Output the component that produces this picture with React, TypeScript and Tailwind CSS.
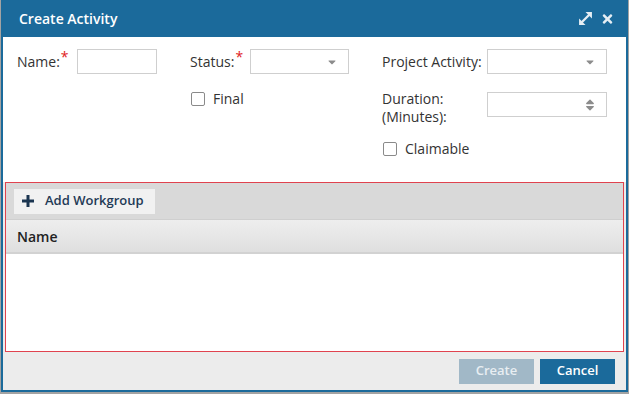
import React from "react";
import { FaTimes, FaCaretDown, FaSort } from "react-icons/fa";

function Req() {
  return <span className="text-[#e02020] text-[14px] leading-none relative -top-[5px] ml-[1px]">*</span>;
}

function Check({ label }: { label: string }) {
  return (
    <label className="flex items-center gap-[8px] text-[14px] text-[#333]">
      <span className="w-[14px] h-[14px] border border-[#8a8a8a] rounded-[2px] bg-white" />
      {label}
    </label>
  );
}

function Select({ w }: { w: string }) {
  return (
    <div className={`${w} h-[25px] border border-[#cfcfcf] bg-white flex items-center justify-end pr-[10px]`}>
      <FaCaretDown className="text-[#8c8c8c] w-[12px] h-[12px]" />
    </div>
  );
}

function ExpandIcon() {
  return (
    <svg width="15" height="15" viewBox="0 0 14 14" className="text-[#e6eef4]">
      <line x1="3.5" y1="10.5" x2="10.5" y2="3.5" stroke="currentColor" strokeWidth="2.2" />
      <polygon points="7,1 13,1 13,7" fill="currentColor" />
      <polygon points="1,7 1,13 7,13" fill="currentColor" />
    </svg>
  );
}

function PlusIcon() {
  return (
    <svg width="12" height="12" viewBox="0 0 12 12" className="text-[#1b3550]">
      <rect x="4.5" y="0" width="3" height="12" fill="currentColor" />
      <rect x="0" y="4.5" width="12" height="3" fill="currentColor" />
    </svg>
  );
}

export default function App() {
  return (
    <div
      className="w-[629px] h-[394px] bg-[#a3a3a3] pl-[1px]"
      style={{ fontFamily: '"Open Sans", "Liberation Sans", sans-serif' }}
    >
      <div className="w-[627px] h-[392px] bg-[#1b6a9b] flex flex-col px-[2px] pb-[2px]">
        {/* title */}
        <div className="h-[37px] flex items-center justify-between pl-[16px] pr-[12px] text-white">
          <span className="text-[14px] font-semibold">Create Activity</span>
          <div className="flex items-center gap-[8px]">
            <ExpandIcon />
            <FaTimes className="w-[13px] h-[14px] text-[#e6eef4]" />
          </div>
        </div>

        <div className="flex-1 bg-[#ececec] flex flex-col">
          {/* form */}
          <div className="bg-white h-[145px] flex pl-[14px] pt-[12px] text-[14px] text-[#333]">
            <div className="w-[173px] flex">
              <div className="w-[60px] h-[25px] flex items-center">
                Name:<Req />
              </div>
              <div className="w-[80px] h-[25px] border border-[#cfcfcf]" />
            </div>

            <div className="w-[192px] flex flex-col">
              <div className="flex">
                <div className="w-[60px] h-[25px] flex items-center">
                  Status:<Req />
                </div>
                <Select w="w-[99px]" />
              </div>
              <div className="pl-[1px] mt-[14px]">
                <Check label="Final" />
              </div>
            </div>

            <div className="flex flex-col">
              <div className="flex">
                <div className="w-[105px] h-[25px] flex items-center">Project Activity:</div>
                <Select w="w-[120px]" />
              </div>
              <div className="flex mt-[18px]">
                <div className="w-[105px] leading-[18px] -mt-[2px]">
                  Duration:
                  <br />
                  (Minutes):
                </div>
                <div className="w-[120px] h-[25px] border border-[#cfcfcf] flex items-center justify-end pr-[10px]">
                  <FaSort className="text-[#8c8c8c] w-[12px] h-[14px]" />
                </div>
              </div>
              <div className="pl-[1px] mt-[12px]">
                <Check label="Claimable" />
              </div>
            </div>
          </div>

          {/* grid */}
          <div className="mx-[2px] h-[170px] border border-[#e0434f] bg-white flex flex-col">
            <div className="h-[36px] bg-[#d9d9d9] flex items-center pl-[8px]">
              <button className="h-[25px] pl-[8px] pr-[11px] bg-[#f1f1f1] flex items-center gap-[11px] text-[13px] font-semibold text-[#1f3a56]">
                <PlusIcon />
                Add Workgroup
              </button>
            </div>
            <div className="h-[35px] bg-gradient-to-b from-[#eeeeee] to-[#dfdfdf] border-t border-[#cfcfcf] border-b-[2px] border-b-[#d2d2d2] flex items-center pl-[11px] text-[14px] font-semibold text-[#222]">
              Name
            </div>
          </div>

          {/* footer */}
          <div className="flex-1 flex items-center justify-end gap-[6px] pr-[11px]">
            <button className="w-[75px] h-[25px] bg-[#a1b8c7] text-[#e8eef2] text-[13px] font-semibold">Create</button>
            <button className="w-[75px] h-[25px] bg-[#1b6a9b] text-white text-[13px] font-semibold">Cancel</button>
          </div>
        </div>
      </div>
    </div>
  );
}
